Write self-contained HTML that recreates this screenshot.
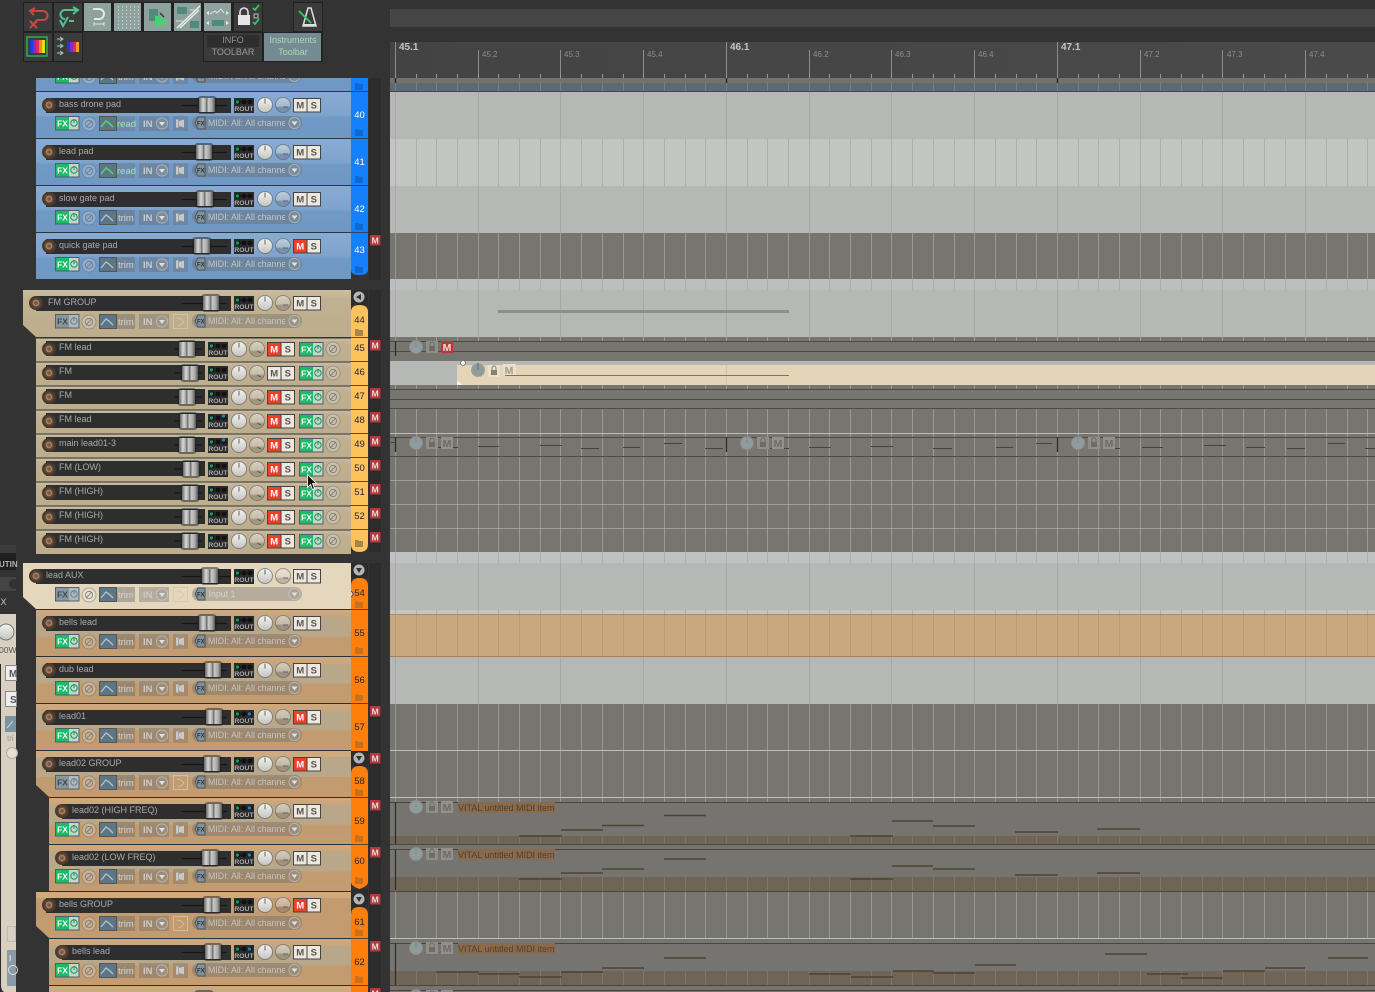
<!DOCTYPE html>
<html><head><meta charset="utf-8"><title>REAPER arrange view</title>
<style>
html,body{margin:0;padding:0;background:#333;width:1375px;height:992px;overflow:hidden}
svg{display:block;font-family:"Liberation Sans",sans-serif;filter:blur(.35px)}
.n{font-size:9px;fill:#a9a9a9}
.num{font-size:9.5px;text-anchor:middle;fill:#2a2620}
.w{fill:#fff}
.r1{font-size:10px;font-weight:bold;fill:#c4c4c4}
.r2{font-size:8px;fill:#8b8b8b}
.mid{font-size:8.8px;fill:#c4c4c4}
.inp{font-size:8.8px;fill:#d6d2c6}
</style></head><body>
<svg width="1375" height="992" viewBox="0 0 1375 992" xmlns="http://www.w3.org/2000/svg">
<defs>
<linearGradient id="gblue" x1="0" y1="0" x2="0" y2="1"><stop offset="0" stop-color="#88abd1"/><stop offset=".5" stop-color="#7fa4cc"/><stop offset=".56" stop-color="#7099c5"/><stop offset="1" stop-color="#6f98c4"/></linearGradient>
<linearGradient id="gor" x1="0" y1="0" x2="0" y2="1"><stop offset="0" stop-color="#cfa97f"/><stop offset=".13" stop-color="#cba67d"/><stop offset=".16" stop-color="#b9a78a"/><stop offset=".55" stop-color="#b9a78a"/><stop offset=".6" stop-color="#c29c70"/><stop offset="1" stop-color="#c39d71"/></linearGradient>
<linearGradient id="gtan" x1="0" y1="0" x2="0" y2="1"><stop offset="0" stop-color="#cbbd9f"/><stop offset=".2" stop-color="#c0b192"/><stop offset="1" stop-color="#bdad8c"/></linearGradient>
<linearGradient id="gth" x1="0" y1="0" x2="1" y2="0"><stop offset="0" stop-color="#666"/><stop offset=".25" stop-color="#d8d8d8"/><stop offset=".45" stop-color="#999"/><stop offset=".5" stop-color="#444"/><stop offset=".55" stop-color="#ccc"/><stop offset=".8" stop-color="#aaa"/><stop offset="1" stop-color="#555"/></linearGradient>
<linearGradient id="gk" x1="0" y1="0" x2="0" y2="1"><stop offset="0" stop-color="#f2f2f0"/><stop offset="1" stop-color="#c4c4c0"/></linearGradient>
<linearGradient id="gk2" x1="0" y1="0" x2="0" y2="1"><stop offset="0" stop-color="#e8e8e4" stop-opacity=".6"/><stop offset=".55" stop-color="#d8d8d4" stop-opacity=".4"/><stop offset=".7" stop-color="#555" stop-opacity=".3"/><stop offset="1" stop-color="#666" stop-opacity=".25"/></linearGradient>
<linearGradient id="grul" x1="0" y1="0" x2="1" y2="0"><stop offset="0" stop-color="#434343"/><stop offset="1" stop-color="#4a4a4a"/></linearGradient>

<path id="gm" d="M395.5 0V1M416.5 0V1M436.5 0V1M457.5 0V1M478.5 0V1M498.5 0V1M519.5 0V1M540.5 0V1M560.5 0V1M581.5 0V1M602.5 0V1M623.5 0V1M643.5 0V1M664.5 0V1M685.5 0V1M705.5 0V1M726.5 0V1M747.5 0V1M767.5 0V1M788.5 0V1M809.5 0V1M829.5 0V1M850.5 0V1M871.5 0V1M891.5 0V1M912.5 0V1M933.5 0V1M954.5 0V1M974.5 0V1M995.5 0V1M1016.5 0V1M1036.5 0V1M1057.5 0V1M1078.5 0V1M1098.5 0V1M1119.5 0V1M1140.5 0V1M1160.5 0V1M1181.5 0V1M1202.5 0V1M1222.5 0V1M1243.5 0V1M1264.5 0V1M1285.5 0V1M1305.5 0V1M1326.5 0V1M1347.5 0V1M1367.5 0V1"/>
<path id="gb" d="M395.5 0V1M478.5 0V1M560.5 0V1M643.5 0V1M726.5 0V1M809.5 0V1M891.5 0V1M974.5 0V1M1057.5 0V1M1140.5 0V1M1222.5 0V1M1305.5 0V1"/>

<clipPath id="cm"><rect x="205" y="0" width="80" height="40"/></clipPath>
<clipPath id="ctop"><rect x="0" y="78" width="390" height="14"/></clipPath>

<g id="knobs">
<circle cx="265" cy="13" r="7.5" fill="url(#gk)" stroke="#555" stroke-opacity=".6"/><path d="M265 6.5V11.5" stroke="#666" fill="none"/>
<circle cx="283" cy="13" r="7.5" fill="url(#gk2)" stroke="#555" stroke-opacity=".55"/><path d="M283 15h5" stroke="#556" stroke-opacity=".8" fill="none"/>
</g>
<g id="rout"><rect width="20" height="15" fill="#2b2b2b"/><ellipse cx="4" cy="4" rx="2.6" ry="2.4" fill="#0c0c0c"/><ellipse cx="10" cy="4" rx="2.6" ry="2.4" fill="#111"/><ellipse cx="16" cy="4" rx="2.6" ry="2.4" fill="#111"/><circle cx="3.5" cy="4" r="1.7" fill="#0c9a5a"/><text x="10" y="13" font-size="6.8" font-weight="bold" fill="#aaa" text-anchor="middle">ROUT</text></g>
<g id="ms"><rect x=".5" y=".5" width="13.5" height="13.5" fill="#ece8df" stroke="#444"/><rect x="14" y=".5" width="13.5" height="13.500" fill="#ece8df" stroke="#444"/><text x="7.2" y="10.5" font-size="9.5" font-weight="bold" fill="#5a564e" text-anchor="middle">M</text><text x="20.8" y="10.5" font-size="9.5" font-weight="bold" fill="#5a564e" text-anchor="middle">S</text></g>
<g id="mact"><rect x=".5" y=".5" width="13.5" height="13.5" fill="#e8432a" stroke="#444"/><text x="7.2" y="10.5" font-size="9.5" font-weight="bold" fill="#fff" text-anchor="middle">M</text></g>
<g id="bm"><rect width="10.5" height="10.5" fill="#b23a3a"/><text x="5.2" y="8.6" font-size="8.5" font-weight="bold" fill="#e8dcdc" text-anchor="middle">M</text></g>
<g id="fxon"><rect x=".5" y=".5" width="23.5" height="13.5" fill="#c5d5cc" stroke="#4f5e68"/><rect x="1" y="1" width="13" height="12.5" fill="#1dbb68"/><text x="7.5" y="10.5" font-size="8.5" font-weight="bold" fill="#fff" text-anchor="middle">FX</text><circle cx="19" cy="7" r="3.2" fill="none" stroke="#169a55"/><path d="M19 3v4" stroke="#169a55"/></g>
<g id="fxoff"><rect x=".5" y=".5" width="23.5" height="13.5" fill="#aeb9be" stroke="#566068"/><rect x="1" y="1" width="13" height="12.5" fill="#87969f"/><text x="7.5" y="10.500" font-size="8.5" font-weight="bold" fill="#3e4a52" text-anchor="middle">FX</text><circle cx="19" cy="7" r="3.2" fill="none" stroke="#6f7f88"/><path d="M19 3v4" stroke="#6f7f88"/></g>
<g id="phase"><circle r="7" fill="#fff" fill-opacity=".2" stroke="#666" stroke-opacity=".45"/><circle r="3.6" fill="none" stroke="#6c7880" stroke-opacity=".8"/><path d="M-3 3L3-3" stroke="#6c7880" stroke-opacity=".8"/></g>
<g id="tri"><rect x="99" y="0" width="36" height="15" fill="#6a6a6a" fill-opacity=".45"/><rect x="99.5" y=".5" width="17" height="14" fill="#5c7686" stroke="#555"/><path d="M101 11l5-6 3 2 4 4" fill="none" stroke="#b5c4cc" stroke-width="1.300"/><text x="118" y="11" font-size="9.5" fill="#d4d4d0">trim</text></g>
<g id="rea"><rect x="99" y="0" width="36" height="15" fill="#6a6a6a" fill-opacity=".3"/><rect x="99.5" y=".5" width="17" height="14" fill="#5c7686" stroke="#555"/><path d="M101 11l5-6 3 2 4 4" fill="none" stroke="#4fd06f" stroke-width="1.600"/><text x="117" y="11" font-size="9.5" fill="#a2e2bb">read</text></g>
<g id="inb"><rect x="139" y="0" width="30" height="15" fill="#6a6a6a" fill-opacity=".38"/><text x="143" y="11" font-size="9.5" font-weight="bold" fill="#cacaca">IN</text><circle cx="162" cy="7.5" r="5.6" fill="#999" fill-opacity=".35" stroke="#d8d8d8" stroke-opacity=".5"/><path d="M159 6h6l-3 4z" fill="#e0e0e0"/></g>
<g id="spk"><rect x="173" y="0" width="15" height="15" fill="#6a6a6a" fill-opacity=".35"/><path d="M176 3.500h2.500v8H176zM179 5l5-1.500v8l-5-1.500z" fill="#c8c8c8"/></g>
<g id="gsp"><rect x="173.5" y=".5" width="14" height="14" fill="none" stroke="#d8c7a2" stroke-opacity=".8"/><path d="M177 4l4 1 3 3-3 3-3 1" fill="none" stroke="#d8c7a2" stroke-opacity=".8"/></g>
<g id="pillb"><rect x="192" y="0" width="110" height="14" rx="7" fill="#666" fill-opacity=".38"/><path d="M195 7l3-6h7v12h-7z" fill="#7d92a0" stroke="#555"/><text x="197" y="9.6" font-size="6" font-weight="bold" fill="#333">FX</text><circle cx="294.5" cy="7" r="5.6" fill="#999" fill-opacity=".35" stroke="#d8d8d8" stroke-opacity=".5"/><path d="M291.5 5.5h6l-3 4z" fill="#e0e0e0"/></g>
<g id="pill"><use href="#pillb"/><text class="mid" x="208" y="10" clip-path="url(#cm)">MIDI: All: All channels</text></g>
<g id="fl"><path d="M0 1h3l1 1h4v6H0z"/></g>

<g id="bcom"><path d="M182 13.5H227" stroke="#161616" stroke-width="1.2"/><use href="#rout" x="234" y="6"/><use href="#knobs"/><use href="#ms" x="293" y="6"/><use href="#phase" x="89" y="32"/><use href="#inb" y="24"/><use href="#pill" y="24"/></g>
<g id="Bron"><use href="#bcom"/><use href="#fxon" x="55" y="24"/><use href="#rea" y="24"/><use href="#spk" y="24"/></g>
<g id="Bton"><use href="#bcom"/><use href="#fxon" x="55" y="24"/><use href="#tri" y="24"/><use href="#spk" y="24"/></g>
<g id="Gtof"><use href="#bcom"/><use href="#fxoff" x="55" y="24"/><use href="#tri" y="24"/><use href="#gsp" y="24"/></g>
<g id="Gton"><use href="#bcom"/><use href="#fxon" x="55" y="24"/><use href="#tri" y="24"/><use href="#gsp" y="24"/></g>

<g id="kn"><circle r="7" fill="#4a392d"/><circle r="5" fill="#5b4636"/><circle r="3.4" fill="#a87e5e"/><circle r="1.8" fill="#6e5a4c"/></g>
<g id="th"><rect x="-10" y="4" width="20" height="18" rx="4" fill="#222" fill-opacity=".5"/><rect x="-8" y="6" width="16" height="14" fill="url(#gth)"/></g>

<g id="sm"><rect x="36" y="0" width="315" height="24" fill="url(#gtan)"/><path d="M36 0H351" stroke="#2c3340"/><rect x="46" y="3" width="159" height="15" fill="#2f2e2e"/><use href="#kn" x="49" y="11"/><path d="M175 11H201" stroke="#161616" stroke-width="1.2"/><use href="#rout" x="208" y="4"/><circle cx="239" cy="11" r="7.5" fill="url(#gk)" stroke="#555" stroke-opacity=".6"/><path d="M239 4.5V9.5" stroke="#666"/><circle cx="257" cy="11" r="7.5" fill="url(#gk2)" stroke="#555" stroke-opacity=".55"/><path d="M257 13l4 2" stroke="#554" stroke-opacity=".8"/><use href="#ms" x="267" y="4"/><use href="#fxon" x="299" y="4"/><use href="#phase" x="333" y="11"/></g>

<g id="itm"><circle r="6.5" fill="#8f9c9e" stroke="#8b8a80"/><path d="M0-7V0" stroke="#7a8a90"/><rect x="10" y="-6" width="12" height="12" fill="#908e89"/><rect x="13" y="-1" width="6" height="5" fill="#6e6c68"/><path d="M14-1v-2a2 2 0 0 1 4 0v2" fill="none" stroke="#6e6c68"/><rect x="25" y="-6" width="12" height="12" fill="#938f8a"/><text x="31" y="4" font-size="10.5" font-weight="bold" fill="#6e6c68" text-anchor="middle">M</text></g>
<g id="vt"><rect x="458" y="-5" width="97" height="11" fill="#8a6a4a"/><text x="458" y="4" font-size="9" fill="#4c4238">VITAL untitled MIDI item</text></g>
</defs>

<!-- base -->
<rect width="1375" height="992" fill="#333"/>

<!-- arrange top -->
<rect x="390" y="9" width="985" height="18" fill="#454545"/>
<rect x="390" y="42" width="985" height="36" fill="url(#grul)"/>
<rect x="395" y="42" width="1" height="36" fill="#8e8e8e"/><rect x="726" y="42" width="1" height="36" fill="#8e8e8e"/><rect x="1057" y="42" width="1" height="36" fill="#8e8e8e"/>
<use href="#gb" stroke="#8c8c8c" transform="translate(0 50) scale(1 28)"/>
<use href="#gm" stroke="#9a9a96" transform="translate(0 74) scale(1 4)"/>
<text class="r1" x="399" y="50">45.1</text><text class="r1" x="730" y="50">46.1</text><text class="r1" x="1061" y="50">47.1</text>
<text class="r2" x="482" y="57">45.2</text><text class="r2" x="564" y="57">45.3</text><text class="r2" x="647" y="57">45.4</text><text class="r2" x="813" y="57">46.2</text><text class="r2" x="895" y="57">46.3</text><text class="r2" x="978" y="57">46.4</text><text class="r2" x="1144" y="57">47.2</text><text class="r2" x="1227" y="57">47.3</text><text class="r2" x="1309" y="57">47.4</text>
<rect x="390" y="78" width="985" height="5" fill="#757269"/>
<rect x="390" y="83" width="985" height="8" fill="#5c6a75"/>
<use href="#gm" stroke="#7f7d78" transform="translate(0 83) scale(1 8)"/>
<rect x="390" y="91" width="985" height="1" fill="#3b4650"/>
<path d="M395.5 78v5M726.5 78v5M1057.5 78v5" stroke="#222" stroke-width="1.4"/>

<!-- track lanes -->
<rect x="390" y="92" width="985" height="47" fill="#b6b8b6"/><use href="#gb" stroke="#a7a9a7" transform="translate(0 92) scale(1 47)"/>
<rect x="390" y="139" width="985" height="47" fill="#c3c5c3"/><use href="#gm" stroke="#adafad" transform="translate(0 139) scale(1 47)"/>
<rect x="390" y="186" width="985" height="47" fill="#b6b8b6"/><use href="#gb" stroke="#a7a9a7" transform="translate(0 186) scale(1 47)"/>
<rect x="390" y="233" width="985" height="46" fill="#777570"/><use href="#gm" stroke="#999896" transform="translate(0 233) scale(1 46)"/>
<rect x="390" y="279" width="985" height="11" fill="#bcbfbf"/><use href="#gm" stroke="#adafad" transform="translate(0 279) scale(1 11)"/>
<rect x="390" y="290" width="985" height="47" fill="#b6b8b6"/><use href="#gb" stroke="#a7a9a7" transform="translate(0 290) scale(1 47)"/>
<rect x="498" y="310" width="291" height="3" fill="#8e8e8b"/>
<rect x="390" y="337" width="985" height="24" fill="#777570"/><use href="#gm" stroke="#999896" transform="translate(0 337) scale(1 4)"/>
<path d="M390 341.5H1375M390 351.5H1375" stroke="#4d4a42"/>
<path d="M395.5 341v15" stroke="#2a2a2a" stroke-width="1.2"/>
<use href="#itm" x="416" y="347"/><rect x="441" y="341" width="12" height="12" fill="#b73a34"/><text x="447" y="351" font-size="10.5" font-weight="bold" fill="#e8dcdc" text-anchor="middle">M</text>
<rect x="390" y="361" width="985" height="24" fill="#b6b8b6"/>
<path d="M457 365H1375V385H463L457 380z" fill="#e4d5b9"/><path d="M457 380l6 5h-6z" fill="#f4f0e8"/>
<rect x="726" y="365" width="1" height="20" fill="#d2c4aa"/>
<circle cx="463" cy="363" r="2.5" fill="#f2f2f2" stroke="#555" stroke-width=".6"/>
<circle cx="478" cy="370" r="6.5" fill="#8f9c9e" stroke="#a89f8c"/><path d="M478 363v7" stroke="#667"/><rect x="488" y="365" width="12" height="12" fill="#ece1cc"/><rect x="491" y="370" width="6" height="5" fill="#8a8172"/><path d="M492 370v-2a2 2 0 0 1 4 0v2" fill="none" stroke="#8a8172"/><rect x="503" y="364" width="13" height="12" fill="#e9dfcb"/><text x="509" y="374" font-size="10.5" font-weight="bold" fill="#a39a88" text-anchor="middle">M</text>
<rect x="505" y="375" width="284" height="1" fill="#7d725e"/>
<rect x="390" y="385" width="985" height="167" fill="#777570"/><use href="#gm" stroke="#999896" transform="translate(0 385) scale(1 4)"/><use href="#gm" stroke="#999896" transform="translate(0 409) scale(1 143)"/>
<path d="M390 389.5H1375M390 399.5H1375M390 408.5H1375M390 437.5H1375M390 456.5H1375" stroke="#4d4a42"/>
<rect x="390" y="433" width="985" height="1" fill="#bdbdbb"/>
<path d="M390 480.5H1375M390 504.5H1375M390 528.5H1375" stroke="#c0c0be" stroke-opacity=".55"/>
<path d="M395.5 437v15M726.5 437v15M1057.5 437v15" stroke="#2a2a2a" stroke-width="1.2"/>
<path d="M391 442.5h4M438 447.5h20M478 446.5h21M540 445.5h22M581 448.5h18M623 447.5h17M664 443.5h18M705 448.5h18M770 448.5h19M809 447.5h22M871 446.5h22M933 448.5h19M996 447.5h17M1036 443.5h16M1103 448.5h17M1142 447.5h21M1204 445.5h22M1246 447.5h19M1287 448.5h18M1328 443.5h17M1365 448.5h10" stroke="#4a4236"/>
<use href="#itm" x="416" y="443"/><use href="#itm" x="747" y="443"/><use href="#itm" x="1078" y="443"/>

<rect x="390" y="552" width="985" height="11" fill="#bec2c2"/><use href="#gm" stroke="#adafad" transform="translate(0 552) scale(1 11)"/>
<rect x="390" y="563" width="985" height="47" fill="#b6b8b6"/><use href="#gb" stroke="#a7a9a7" transform="translate(0 563) scale(1 47)"/>
<rect x="390" y="610" width="985" height="4" fill="#c3c5c3"/><use href="#gm" stroke="#adafad" transform="translate(0 610) scale(1 4)"/>
<rect x="390" y="614" width="985" height="42" fill="#c9a77f"/><use href="#gm" stroke="#bf9a70" transform="translate(0 614) scale(1 42)"/>
<rect x="390" y="614" width="985" height="1" fill="#b08a60"/><rect x="390" y="656" width="985" height="1" fill="#a87e56"/>
<rect x="390" y="657" width="985" height="47" fill="#b6b8b6"/><use href="#gb" stroke="#a7a9a7" transform="translate(0 657) scale(1 47)"/>
<rect x="390" y="704" width="985" height="288" fill="#777570"/><use href="#gm" stroke="#999896" transform="translate(0 704) scale(1 98)"/><use href="#gm" stroke="#999896" transform="translate(0 891) scale(1 47)"/>
<rect x="390" y="802" width="985" height="89" fill="#767470"/>
<rect x="390" y="836" width="985" height="8" fill="#6e6556"/><rect x="390" y="877" width="985" height="14" fill="#6e6556"/><rect x="390" y="943" width="985" height="49" fill="#767470"/><rect x="390" y="971" width="985" height="14" fill="#6e6556"/>
<use href="#gm" stroke="#7f7668" transform="translate(0 836) scale(1 8)"/><use href="#gm" stroke="#7f7668" transform="translate(0 877) scale(1 14)"/><use href="#gm" stroke="#7f7668" transform="translate(0 971) scale(1 14)"/>
<rect x="390" y="750" width="985" height="1" fill="#bdbdbb"/><rect x="390" y="797" width="985" height="1" fill="#bdbdbb"/><rect x="390" y="938" width="985" height="1" fill="#bdbdbb"/>
<path d="M390 802.5H1375M390 844.5H1375M390 849.5H1375M390 891.5H1375M390 943.5H1375M390 985.5H1375M390 990.5H1375" stroke="#4d4538"/>
<path d="M395.5 802v42M395.5 849v41M395.5 943v42" stroke="#2c2c2c" stroke-width="1.2"/>
<g stroke="#4f4233" stroke-width="1.6">
<path d="M519 836h43M561 830h42M602 825.5h42M664 815.5h42M850 836h43M892 821h41M933 826h42M1015 832h43M1097 829h43"/>
<path d="M519 879h43M561 873h42M602 869h42M664 859h42M850 879h43M892 866h41M933 869h42M1015 875h43M1097 873h43"/>
<path d="M436 972h43M478 974h42M519 977h43M561 972h42M602 968h42M664 958h42M809 974h42M851 977h42M893 971h41M933 973h42M975 965h41M1105 954h42M1147 974h41M1181 978h42M1223 971h42M1265 968h40M1328 958h40"/>
</g>
<use href="#itm" x="416" y="807"/><use href="#vt" y="807"/><use href="#itm" x="416" y="854"/><use href="#vt" y="854"/><use href="#itm" x="416" y="948"/><use href="#vt" y="948"/><use href="#itm" x="416" y="996"/>

<!-- toolbar -->
<rect x="23" y="2" width="240" height="30" fill="#222"/><rect x="23" y="32" width="60" height="30" fill="#222"/><rect x="293" y="2" width="30" height="30" fill="#222"/><rect x="203" y="32" width="120" height="30" fill="#222"/>
<rect x="24" y="3" width="28" height="28" fill="#3b3b3b"/><rect x="54" y="3" width="28" height="28" fill="#3b3b3b"/>
<rect x="84" y="3" width="27" height="28" fill="#8fa19c"/><rect x="114" y="3" width="27" height="28" fill="#8fa19c"/><rect x="144" y="3" width="27" height="28" fill="#8fa19c"/><rect x="174" y="3" width="27" height="28" fill="#8fa19c"/><rect x="204" y="3" width="27" height="28" fill="#8fa19c"/>
<rect x="234" y="3" width="28" height="28" fill="#3b3b3b"/><rect x="294" y="3" width="28" height="28" fill="#3b3b3b"/><rect x="24" y="33" width="28" height="28" fill="#3b3b3b"/><rect x="54" y="33" width="28" height="28" fill="#3b3b3b"/>
<rect x="204" y="33" width="58" height="28" fill="#3a3a3a"/><rect x="207" y="35" width="52" height="12" fill="#2e2e2e"/><rect x="264" y="33" width="57" height="28" fill="#768a93"/>
<text x="233" y="43" font-size="9" fill="#8f8f8f" text-anchor="middle">INFO</text><text x="233" y="55" font-size="9" fill="#9a9a9a" text-anchor="middle">TOOLBAR</text>
<text x="293" y="43" font-size="9" fill="#a8dcb0" text-anchor="middle">Instruments</text><text x="293" y="55" font-size="9" fill="#a8dcb0" text-anchor="middle">Toolbar</text>
<path d="M35 8l-5 3 4 4M30 11h13a4.5 4.5 0 0 1 0 9h-6l-6 7" fill="none" stroke="#c14a44" stroke-width="2"/><path d="M30 21l7 7M37 21l-7 7" stroke="#c14a44" stroke-width="2"/>
<path d="M73 7l5 3-5 4M78 10H65a4.5 4.5 0 0 0 0 9l-1 0" fill="none" stroke="#4fc38e" stroke-width="2"/><path d="M60 20l3 6 5-9M69 21h5" fill="none" stroke="#4fc38e" stroke-width="2"/>
<path d="M90 7v21" stroke="#aebdb8" stroke-dasharray="1 2"/><path d="M93 9h6a5 5 0 0 1 0 10h-5" fill="none" stroke="#d9f0df" stroke-width="2"/><path d="M94 24h10M94 22v4M104 22v4" stroke="#d8e8de" stroke-width="1"/>
<g stroke="#c7d2ce" stroke-dasharray="1.5 2"><path d="M118.5 6v23M122.5 6v23M126.5 6v23M130.5 6v23M134.5 6v23M138.5 6v23"/></g>
<rect x="149" y="9" width="9" height="12" fill="#4f8a7a"/><path d="M155 15l11 5v6h-11z" fill="#2ee06b"/><path d="M160 13l4 4" stroke="#1d3b2d" stroke-width="1.4"/><rect x="158" y="20" width="7" height="6" fill="#58c87a"/>
<rect x="177" y="7" width="10" height="7" fill="#4f8a7a"/><rect x="190" y="21" width="9" height="7" fill="#4f8a7a"/><path d="M177 28L200 6M180 28L199 10" stroke="#e5eeea" stroke-width="1.5"/><path d="M176 21h8M190 10h7" stroke="#d5e0dc"/>
<path d="M210 14l5-3 2 2 4-4 3 4" fill="none" stroke="#e3e8e6"/><rect x="212" y="20" width="12" height="6" fill="#4f8a7a"/><path d="M206 13l3-2v4zM229 13l-3-2v4zM206 23l3-2v4zM229 23l-3-2v4z" fill="#e3e8e6"/>
<rect x="238" y="15" width="12" height="10" fill="#e5e5e5"/><path d="M240 15v-3a4 4 0 0 1 8 0v3" fill="none" stroke="#e5e5e5" stroke-width="1.6"/><path d="M253 8l2 2 4-5M253 22l2 2 4-5" stroke="#2ecf5a" stroke-width="1.7" fill="none"/><rect x="254" y="14" width="4" height="4" fill="none" stroke="#bbb"/>
<path d="M303 26l5-18h3l5 18z" fill="none" stroke="#e0e0e0" stroke-width="1.5"/><path d="M304 26h11v-2h-11z" fill="#e0e0e0"/><path d="M299 11l12 12" stroke="#2ecf5a" stroke-width="1.8"/>
<rect x="27" y="37" width="20" height="19" fill="none" stroke="#27b34a" stroke-width="1.5"/>
<rect x="30" y="40" width="3" height="13" fill="#1d3fd0"/><rect x="33" y="40" width="3" height="13" fill="#8a25d0"/><rect x="36" y="40" width="3" height="13" fill="#e02a5a"/><rect x="39" y="40" width="3" height="13" fill="#f08a20"/><rect x="42" y="40" width="3" height="13" fill="#e0e020"/>
<path d="M57 39h5M60 37l3 2-3 2M57 46h5M60 44l3 2-3 2M57 53h5M60 51l3 2-3 2" stroke="#9fd3ae" fill="none"/>
<rect x="67" y="42" width="3" height="10" fill="#1d3fd0"/><rect x="70" y="42" width="3" height="10" fill="#8a25d0"/><rect x="73" y="42" width="3" height="10" fill="#e02a5a"/><rect x="76" y="42" width="3" height="10" fill="#f0a020"/>

<!-- left mixer fragment -->
<rect x="0" y="545" width="16" height="8" fill="#3c3c3c"/>
<rect x="0" y="553" width="16" height="17" fill="#1f1f1f"/><text x="-1" y="567" font-size="8" font-weight="bold" fill="#b0b0b0">UTIN</text>
<rect x="0" y="577" width="16" height="14" fill="#444"/><circle cx="14" cy="584" r="5" fill="#333"/>
<text x="-2" y="605" font-size="9" fill="#c8c8c8">IX</text>
<path d="M0 614H16V992H4Q1 990 1 985V664H0z" fill="#d9d0c2"/>
<rect x="0" y="664" width="1" height="328" fill="#2a2a2a"/>
<circle cx="6" cy="632" r="8" fill="url(#gk)" stroke="#777"/><text x="-1" y="653" font-size="8.5" fill="#555">00W</text>
<rect x="5.5" y="665.5" width="11" height="15" fill="#eee" stroke="#888"/><text x="9" y="677" font-size="10" font-weight="bold" fill="#555">M</text>
<rect x="5.5" y="691.5" width="11" height="15" fill="#eee" stroke="#888"/><text x="10" y="703" font-size="10" font-weight="bold" fill="#555">S</text>
<rect x="5" y="716" width="11" height="16" fill="#7b94a2"/><path d="M7 728l6-7" stroke="#c6d2d8"/>
<text x="7" y="741" font-size="8" fill="#999">tri</text>
<circle cx="12" cy="753" r="5.5" fill="#e6dfd2" stroke="#aaa"/>
<rect x="7.5" y="926.5" width="8" height="15" fill="none" stroke="#bbb"/>
<rect x="7" y="950" width="9" height="36" fill="#8a9aa8"/><text x="9" y="961" font-size="8" font-weight="bold" fill="#ddd">I</text><circle cx="13" cy="970" r="4.5" fill="none" stroke="#ddd"/>

<!-- number column -->
<path d="M351 78H368V270Q368 275 359.5 275Q351 275 351 270z" fill="#1480fb"/>
<path d="M351 312Q351 305 359.5 305Q368 305 368 312V544Q368 552 359.5 552Q351 552 351 544z" fill="#fdc25c"/>
<path d="M351 586Q351 578 359.5 578Q368 578 368 586V751H351z" fill="#ff7f0c"/>
<path d="M351 774Q351 766 359.5 766Q368 766 368 774V882Q368 886 359.5 889Q351 886 351 882z" fill="#ff7f0c"/>
<path d="M351 915Q351 907 359.5 907Q368 907 368 915V992H351z" fill="#ff7f0c"/>
<rect x="369" y="78" width="12" height="202" fill="#2c2c2c"/><rect x="369" y="290" width="12" height="262" fill="#2c2c2c"/><rect x="369" y="563" width="12" height="429" fill="#2c2c2c"/>
<rect x="351" y="290" width="17" height="15" fill="#2c2c2c"/><rect x="351" y="563" width="17" height="15" fill="#2c2c2c"/><rect x="351" y="751" width="17" height="15" fill="#2c2c2c"/><rect x="351" y="889" width="17" height="18" fill="#2c2c2c"/>
<circle cx="359" cy="297" r="5.5" fill="#b5b5b5"/><path d="M356 297l5-3v6z" fill="#333"/>
<circle cx="359" cy="570" r="5.5" fill="#b5b5b5"/><path d="M356 568h6l-3 5z" fill="#333"/>
<circle cx="359" cy="758" r="5.5" fill="#b5b5b5"/><path d="M356 756h6l-3 5z" fill="#333"/>
<circle cx="359" cy="899" r="5.5" fill="#b5b5b5"/><path d="M356 897h6l-3 5z" fill="#333"/>
<path d="M351 91.5h17M351 138.5h17M351 185.5h17M351 232.5h17M351 337.5h17M351 361.5h17M351 385.5h17M351 409.5h17M351 433.5h17M351 457.5h17M351 481.5h17M351 505.5h17M351 529.5h17M351 609.5h17M351 656.5h17M351 703.5h17M351 797.5h17M351 844.5h17M351 938.5h17M351 985.5h17" stroke="#2e3a48" stroke-opacity=".85"/>
<g fill="#0e6ad0"><use href="#fl" x="355" y="82"/><use href="#fl" x="355" y="128"/><use href="#fl" x="355" y="175"/><use href="#fl" x="355" y="222"/><use href="#fl" x="355" y="265"/></g>
<g fill="#a58548"><use href="#fl" x="355" y="328"/><use href="#fl" x="355" y="539"/></g>
<g fill="#c9701c"><use href="#fl" x="355" y="600"/><use href="#fl" x="355" y="646"/><use href="#fl" x="355" y="693"/><use href="#fl" x="355" y="740"/><use href="#fl" x="355" y="788"/><use href="#fl" x="355" y="834"/><use href="#fl" x="355" y="876"/><use href="#fl" x="355" y="928"/><use href="#fl" x="355" y="975"/></g>
<text class="num w" x="359.5" y="118">40</text><text class="num w" x="359.5" y="165">41</text><text class="num w" x="359.5" y="212">42</text><text class="num w" x="359.5" y="253">43</text>
<text class="num" x="359.5" y="323">44</text><text class="num" x="359.5" y="351">45</text><text class="num" x="359.5" y="375">46</text><text class="num" x="359.5" y="399">47</text><text class="num" x="359.5" y="423">48</text><text class="num" x="359.5" y="447">49</text><text class="num" x="359.5" y="471">50</text><text class="num" x="359.5" y="495">51</text><text class="num" x="359.5" y="519">52</text>
<text class="num" x="359.5" y="596">54</text><text class="num" x="359.5" y="636">55</text><text class="num" x="359.5" y="683">56</text><text class="num" x="359.5" y="730">57</text><text class="num" x="359.5" y="784">58</text><text class="num" x="359.5" y="824">59</text><text class="num" x="359.5" y="864">60</text><text class="num" x="359.5" y="925">61</text><text class="num" x="359.5" y="965">62</text>
<use href="#bm" x="370" y="235"/><use href="#bm" x="370" y="340"/><use href="#bm" x="370" y="388"/><use href="#bm" x="370" y="412"/><use href="#bm" x="370" y="436"/><use href="#bm" x="370" y="460"/><use href="#bm" x="370" y="484"/><use href="#bm" x="370" y="508"/><use href="#bm" x="370" y="532"/><use href="#bm" x="370" y="706"/><use href="#bm" x="370" y="753"/><use href="#bm" x="370" y="800"/><use href="#bm" x="370" y="847"/><use href="#bm" x="370" y="894"/><use href="#bm" x="370" y="941"/><use href="#bm" x="370" y="988"/>
<circle cx="350.5" cy="594" r="2.5" fill="#ddd" stroke="#444"/>

<!-- partial top track -->
<g clip-path="url(#ctop)"><rect x="36" y="45" width="315" height="47" fill="url(#gblue)"/><use href="#Bton" y="45"/></g>

<!-- blue tracks -->
<rect x="36" y="92" width="315" height="46" fill="url(#gblue)"/><rect x="36" y="139" width="315" height="46" fill="url(#gblue)"/><rect x="36" y="186" width="315" height="46" fill="url(#gblue)"/><rect x="36" y="233" width="315" height="46" fill="url(#gblue)"/>
<path d="M36 91.5H351M36 138.5H351M36 185.5H351M36 232.5H351" stroke="#2b3543"/>
<g fill="#2f2e2e"><rect x="46" y="98" width="185" height="15"/><rect x="46" y="145" width="185" height="15"/><rect x="46" y="192" width="185" height="15"/><rect x="46" y="239" width="185" height="15"/></g>
<use href="#kn" x="49" y="105"/><use href="#kn" x="49" y="152"/><use href="#kn" x="49" y="199"/><use href="#kn" x="49" y="246"/>
<use href="#Bron" y="92"/><use href="#Bron" y="139"/><use href="#Bton" y="186"/><use href="#Bton" y="233"/>
<use href="#th" x="207" y="92"/><use href="#th" x="204" y="139"/><use href="#th" x="205" y="186"/><use href="#th" x="202" y="233"/>
<use href="#mact" x="293" y="239"/>
<text class="n" x="59" y="107">bass drone pad</text><text class="n" x="59" y="154">lead pad</text><text class="n" x="59" y="201">slow gate pad</text><text class="n" x="59" y="248">quick gate pad</text>

<!-- FM group -->
<path d="M23 290H351V337H36L23 325z" fill="url(#gtan)"/>
<rect x="36" y="296" width="195" height="15" fill="#2f2e2e"/><use href="#kn" x="36" y="303"/>
<use href="#Gtof" y="290"/><use href="#th" x="211" y="290"/>
<text class="n" x="48" y="305">FM GROUP</text>

<use href="#sm" y="338"/><use href="#sm" y="362"/><use href="#sm" y="386"/><use href="#sm" y="410"/><use href="#sm" y="434"/><use href="#sm" y="458"/><use href="#sm" y="482"/><use href="#sm" y="506"/><use href="#sm" y="530"/>
<use href="#th" x="187" y="336"/><use href="#th" x="190" y="360"/><use href="#th" x="187" y="384"/><use href="#th" x="188" y="408"/><use href="#th" x="187" y="432"/><use href="#th" x="191" y="456"/><use href="#th" x="190" y="480"/><use href="#th" x="190" y="504"/><use href="#th" x="190" y="528"/>
<use href="#mact" x="267" y="342"/><use href="#mact" x="267" y="390"/><use href="#mact" x="267" y="414"/><use href="#mact" x="267" y="438"/><use href="#mact" x="267" y="462"/><use href="#mact" x="267" y="486"/><use href="#mact" x="267" y="510"/><use href="#mact" x="267" y="534"/>
<circle cx="223.5" cy="416" r="1.7" fill="#1a7fb5"/><circle cx="223.5" cy="440" r="1.7" fill="#1a7fb5"/>
<text class="n" x="59" y="350">FM lead</text><text class="n" x="59" y="374">FM</text><text class="n" x="59" y="398">FM</text><text class="n" x="59" y="422">FM lead</text><text class="n" x="59" y="446">main lead01-3</text><text class="n" x="59" y="470">FM (LOW)</text><text class="n" x="59" y="494">FM (HIGH)</text><text class="n" x="59" y="518">FM (HIGH)</text><text class="n" x="59" y="542">FM (HIGH)</text>

<!-- lead AUX -->
<path d="M23 563H351V609H36L23 597z" fill="#e5d7bd"/>
<rect x="36" y="569" width="195" height="15" fill="#2f2e2e"/><use href="#kn" x="36" y="576"/>
<path d="M182 576.5H231" stroke="#161616" stroke-width="1.2"/><use href="#rout" x="234" y="569"/><use href="#knobs" y="563"/><use href="#ms" x="293" y="569"/>
<use href="#phase" x="89" y="595"/><use href="#inb" y="587"/><use href="#fxoff" x="55" y="587"/><use href="#tri" y="587"/><use href="#gsp" y="587"/><use href="#pillb" y="587"/>
<text class="inp" x="208.5" y="597">Input 1</text>
<use href="#th" x="210" y="563"/>
<text class="n" x="46" y="578">lead AUX</text>

<!-- orange tracks -->
<rect x="36" y="610" width="315" height="46" fill="url(#gor)"/><rect x="36" y="657" width="315" height="46" fill="url(#gor)"/><rect x="36" y="704" width="315" height="46" fill="url(#gor)"/>
<path d="M36 609.5H351M36 656.5H351M36 703.5H351M36 750.5H351" stroke="#2b3036"/>
<path d="M36 751H351V797H49L36 785z" fill="#c29c70"/><rect x="36" y="757" width="315" height="20" fill="#b9a78a"/><path d="M36 751H351V757H36z" fill="#cfa97f"/>
<rect x="49" y="798" width="302" height="46" fill="url(#gor)"/><rect x="49" y="845" width="302" height="46" fill="url(#gor)"/>
<path d="M36 892H351V938H49L36 926z" fill="#c29c70"/><path d="M36 892H351V898H36z" fill="#cfa97f"/>
<rect x="49" y="939" width="302" height="46" fill="url(#gor)"/><rect x="49" y="986" width="302" height="6" fill="#cfa97f"/>
<path d="M49 797.5H351M49 844.5H351M36 891.5H351M49 938.5H351M49 985.5H351" stroke="#2b3036"/>
<g fill="#2f2e2e"><rect x="46" y="616" width="185" height="15"/><rect x="46" y="663" width="185" height="15"/><rect x="46" y="710" width="185" height="15"/><rect x="46" y="757" width="185" height="15"/><rect x="62" y="804" width="169" height="15"/><rect x="62" y="851" width="169" height="15"/><rect x="46" y="898" width="185" height="15"/><rect x="62" y="945" width="169" height="15"/></g>
<use href="#kn" x="49" y="623"/><use href="#kn" x="49" y="670"/><use href="#kn" x="49" y="717"/><use href="#kn" x="49" y="764"/><use href="#kn" x="62" y="811"/><use href="#kn" x="62" y="858"/><use href="#kn" x="49" y="905"/><use href="#kn" x="62" y="952"/>
<use href="#Bton" y="610"/><use href="#Bton" y="657"/><use href="#Bton" y="704"/><use href="#Gtof" y="751"/><use href="#Bton" y="798"/><use href="#Bton" y="845"/><use href="#Gton" y="892"/><use href="#Bton" y="939"/>
<use href="#th" x="207" y="610"/><use href="#th" x="213" y="657"/><use href="#th" x="214" y="704"/><use href="#th" x="212" y="751"/><use href="#th" x="214" y="798"/><use href="#th" x="210" y="845"/><use href="#th" x="212" y="892"/><use href="#th" x="213" y="939"/><use href="#th" x="204" y="986"/>
<use href="#mact" x="293" y="710"/><use href="#mact" x="293" y="757"/><use href="#mact" x="293" y="898"/>
<circle cx="249.5" cy="714" r="1.7" fill="#1a7fb5"/><circle cx="249.5" cy="808" r="1.7" fill="#1a7fb5"/><circle cx="249.5" cy="855" r="1.7" fill="#1a7fb5"/><circle cx="249.5" cy="949" r="1.7" fill="#1a7fb5"/>
<text class="n" x="59" y="625">bells lead</text><text class="n" x="59" y="672">dub lead</text><text class="n" x="59" y="719">lead01</text><text class="n" x="59" y="766">lead02 GROUP</text><text class="n" x="72" y="813">lead02 (HIGH FREQ)</text><text class="n" x="72" y="860">lead02 (LOW FREQ)</text><text class="n" x="59" y="907">bells GROUP</text><text class="n" x="72" y="954">bells lead</text>

<!-- cursor -->
<path d="M307.5 474.5v13l3-3 2 5 2-1-2-5h4z" fill="#111" stroke="#fff" stroke-width=".8"/>
</svg>
</body></html>
